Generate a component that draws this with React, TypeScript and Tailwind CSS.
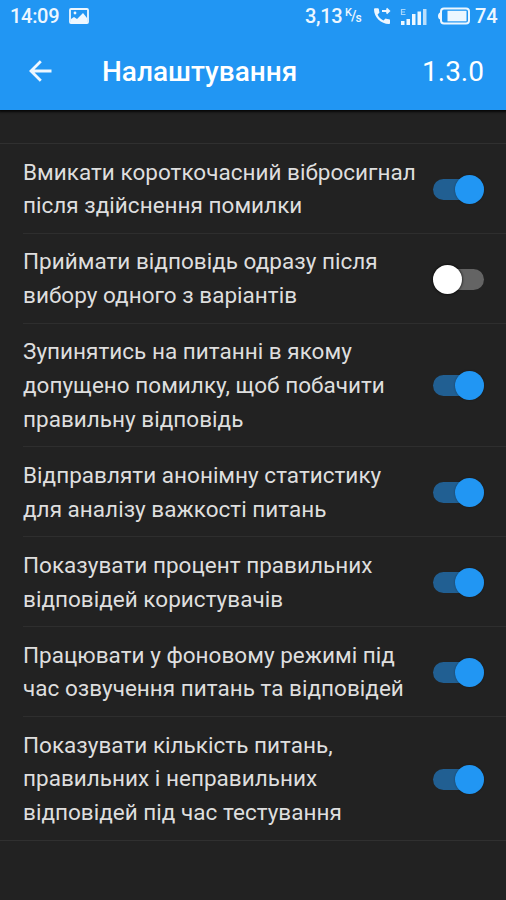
type Setting = { lines: string[]; on: boolean };

const settings: Setting[] = [
  { lines: ['Вмикати короткочасний вібросигнал', 'після здійснення помилки'], on: true },
  { lines: ['Приймати відповідь одразу після', 'вибору одного з варіантів'], on: false },
  { lines: ['Зупинятись на питанні в якому', 'допущено помилку, щоб побачити', 'правильну відповідь'], on: true },
  { lines: ['Відправляти анонімну статистику', 'для аналізу важкості питань'], on: true },
  { lines: ['Показувати процент правильних', 'відповідей користувачів'], on: true },
  { lines: ['Працювати у фоновому режимі під', 'час озвучення питань та відповідей'], on: true },
  { lines: ['Показувати кількість питань,', 'правильних і неправильних', 'відповідей під час тестування'], on: true },
];

function Toggle({ on }: { on: boolean }) {
  return (
    <div role="switch" aria-checked={on} className="flex h-[29px] w-[51px] shrink-0 items-center">
      <div className={`flex h-[21px] w-full items-center rounded-full ${on ? 'justify-end bg-[#215f92]' : 'justify-start bg-[#646464]'}`}>
        <div className={`size-[29px] shrink-0 rounded-full ${on ? 'bg-[#2196f3] shadow-[0_0_2px_0_rgba(0,0,0,0.35)]' : 'bg-white shadow-[0_0_2px_1px_rgba(0,0,0,0.5)]'}`} />
      </div>
    </div>
  );
}

function StatusBar() {
  return (
    <div className="flex h-8 items-center justify-between pr-[9px] pl-[10px] text-[20px] leading-8 font-medium text-[#edf7ff]">
      <div className="flex items-center gap-[10px]">
        <span className="w-[49px] tracking-[-0.3px]">14:09</span>
        <svg width="20" height="16" viewBox="0 0 20 16">
          <rect x="1" y="1" width="18" height="14" rx="1" fill="none" stroke="currentColor" strokeWidth="1.8" />
          <circle cx="6" cy="5" r="1.4" fill="currentColor" />
          <path d="M2 11l3-2 3 2 6-6 4 5v5H2z" fill="currentColor" />
        </svg>
      </div>
      <div className="flex items-center">
        <span className="w-[40px] tracking-[-0.3px]">3,13</span>
        <span className="flex w-[17px] items-center text-[11px] leading-none">
          <span className="-mt-[7px]">K</span>
          <span className="-ml-px text-[14px]">/</span>
          <span className="mt-[4px] -ml-px text-[12px]">s</span>
        </span>
        <svg className="ml-[11px]" width="18" height="18" viewBox="0 0 18 18">
          <path d="M1 2.3c0-.6.5-1.1 1.1-1.1h2.7c.6 0 1 .4 1.1 1 .1 1.2.3 2.3.6 3.2L4.6 7.6c1.2 2.7 3 4.6 5.8 5.9l2.2-2c.9.4 2 .6 3.3.7.6 0 1.1.5 1.1 1.1V16c0 .6-.5 1-1.1 1C8.2 17 1 10.5 1 2.3z" fill="currentColor" />
          <path d="M9 4h7M13.5 1.5 16.2 4l-2.7 2.5" fill="none" stroke="currentColor" strokeWidth="1.8" />
        </svg>
        <svg className="ml-[9px]" width="27" height="17" viewBox="0 0 27 17">
          <path d="M1 13h3.5v4H1zM6.5 11H10v6H6.5zM12 6h3.5v11H12zM17.5 3.5H21V17h-3.5z" fill="currentColor" />
          <path d="M23 1h3.5v16H23z" fill="currentColor" opacity=".75" />
          <path d="M5.5 1.5h-4v5h4M1.5 4H5" fill="none" stroke="currentColor" strokeWidth="1.2" opacity=".65" />
        </svg>
        <svg className="ml-[10px]" width="33" height="18" viewBox="0 0 33 18">
          <rect x="4" y="1.5" width="28" height="15" rx="3" fill="none" stroke="currentColor" strokeWidth="2" />
          <path d="M3 5.5C.3 6.5.3 11.5 3 12.5z" fill="currentColor" />
          <rect x="10.5" y="3.8" width="19" height="10.5" fill="currentColor" />
        </svg>
        <span className="ml-[5px] w-[22px] tracking-[-0.2px]">74</span>
      </div>
    </div>
  );
}

export default function App() {
  return (
    <main className="h-[900px] w-[506px] overflow-hidden bg-[#222222] font-[Roboto,sans-serif]">
      <header className="h-[110px] bg-[#2196f3] text-white shadow-[0_1px_2px_1px_#080808]">
        <StatusBar />
        <div className="flex h-[78px] items-center pr-[22px] pl-[28px]">
          <svg width="24" height="23" viewBox="0 0 24 23" fill="none" stroke="#edf7ff" strokeWidth="2.8">
            <path d="M23.5 11H3M12.8 1.2 3 11l9.8 9.8" />
          </svg>
          <h1 className="ml-[50px] flex-1 pt-px text-[28px] font-medium">Налаштування</h1>
          <span className="pt-px text-[28px]">1.3.0</span>
        </div>
      </header>
      <section className="mt-[33px] border-y border-[#303030]">
        {settings.map((item, i) => (
          <div key={item.lines[0]} className="pl-[23px]">
            <div className={`flex items-center justify-between border-[#2e2e2e] pt-[11.5px] pr-[22px] pb-[9.9px] ${i > 0 ? 'border-t' : ''}`}>
              <p className="text-[22.5px] leading-[33.75px] tracking-[0.02px] whitespace-nowrap text-[#dedede]">
                {item.lines.map((line) => (
                  <span key={line} className="block">{line}</span>
                ))}
              </p>
              <Toggle on={item.on} />
            </div>
          </div>
        ))}
      </section>
    </main>
  );
}
